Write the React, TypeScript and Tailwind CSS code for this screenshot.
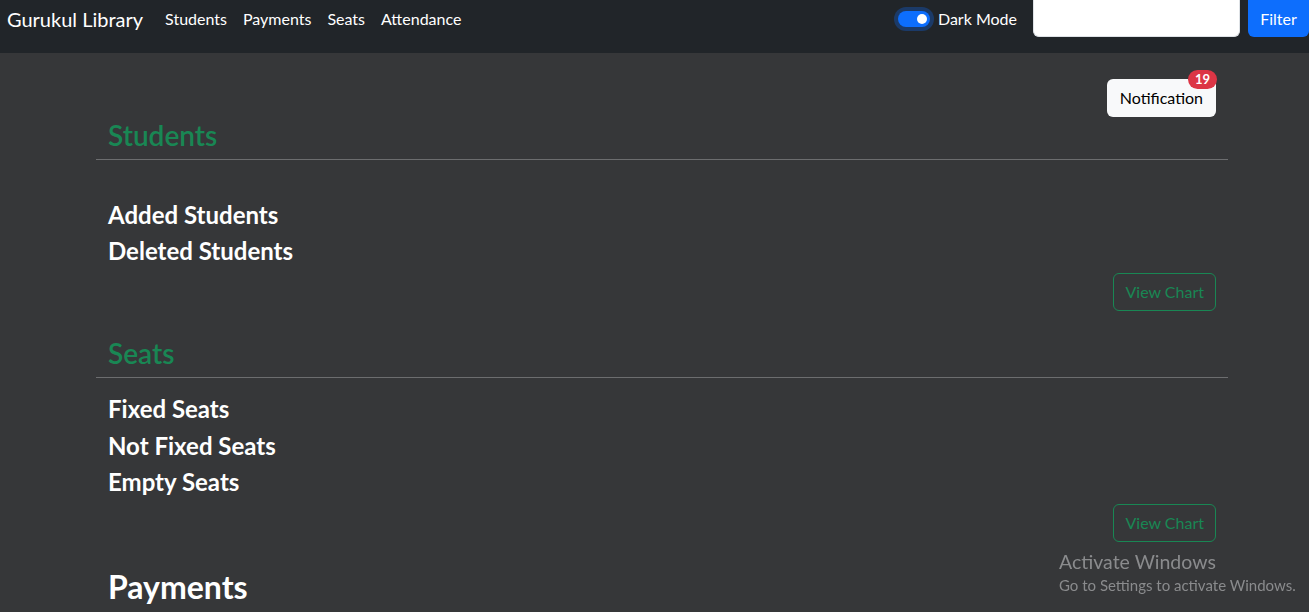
import React from "react";

function ViewChart({ mb }: { mb: string }) {
  return (
    <div className={`flex justify-end px-3 ${mb}`}>
      <button className="h-[38px] px-[11px] border border-[#198754] text-[#198754] rounded-md text-[16px] leading-6">
        View Chart
      </button>
    </div>
  );
}

export default function App() {
  return (
    <div
      className="min-h-[612px] bg-[#363739] text-white relative overflow-hidden"
      style={{ fontFamily: "Lato, 'Noto Sans', sans-serif" }}
    >
      <nav className="h-[53px] bg-[#212529] flex items-start">
        <div className="h-[37px] w-full flex items-center">
          <span className="pl-[7px] text-[20px] leading-[30px] text-white">Gurukul Library</span>
          <div className="flex items-center ml-[14px] text-[16px]">
            <span className="px-2">Students</span>
            <span className="px-2">Payments</span>
            <span className="px-2">Seats</span>
            <span className="px-2">Attendance</span>
          </div>
          <div className="ml-auto flex items-center h-full">
            <div className="w-8 h-4 rounded-full bg-[#0d6efd] ring-4 ring-[#0d6efd]/30 flex items-center justify-end px-[3px]">
              <div className="w-[10px] h-[10px] rounded-full bg-white" />
            </div>
            <span className="ml-2 text-[16px]">Dark Mode</span>
            <div className="ml-4 w-[207px] h-[37px] bg-white rounded-b-md border border-[#dee2e6] border-t-0" />
            <button className="ml-2 w-[61px] h-[37px] bg-[#0d6efd] text-white text-[16px] rounded-b-md">
              Filter
            </button>
          </div>
        </div>
      </nav>

      <main className="w-[1132px] ml-[96px]">
        <div className="pt-[26px] flex justify-end px-3">
          <button className="relative h-[38px] px-[13px] bg-[#f8f9fa] text-black rounded-md text-[16px]">
            Notification
            <span className="absolute -top-[9px] -right-[1px] h-[19px] px-[7px] rounded-full bg-[#dc3545] text-white text-[13px] font-bold leading-[19px]">
              19
            </span>
          </button>
        </div>

        <h3 className="px-3 pt-[2px] text-[28px] leading-[33.6px] font-semibold text-[#198754]">Students</h3>
        <hr className="border-[#6c6d6f] mt-[6px] mb-4" />
        <div className="h-[25px]" />
        <div className="px-3">
          <h4 className="text-[24px] leading-[28.8px] font-bold mb-2">Added Students</h4>
          <h4 className="text-[24px] leading-[28.8px] font-bold mb-[7px]">Deleted Students</h4>
        </div>
        <ViewChart mb="mb-[24px]" />

        <h3 className="px-3 pt-[2px] text-[28px] leading-[33.6px] font-semibold text-[#198754]">Seats</h3>
        <hr className="border-[#6c6d6f] mt-[6px] mb-[17px]" />
        <div className="px-3">
          <h4 className="text-[24px] leading-[28.8px] font-bold mb-2">Fixed Seats</h4>
          <h4 className="text-[24px] leading-[28.8px] font-bold mb-2">Not Fixed Seats</h4>
          <h4 className="text-[24px] leading-[28.8px] font-bold mb-[7px]">Empty Seats</h4>
        </div>
        <ViewChart mb="mb-[26px]" />

        <h2 className="px-3 text-[32px] leading-[38.4px] font-bold text-white">Payments</h2>
      </main>

      <div className="fixed left-[1059px] top-[549px] text-[#8a8b8d] pointer-events-none">
        <div className="text-[19.5px] leading-[26px]">Activate Windows</div>
        <div className="text-[15px] leading-[20px]">Go to Settings to activate Windows.</div>
      </div>
    </div>
  );
}
